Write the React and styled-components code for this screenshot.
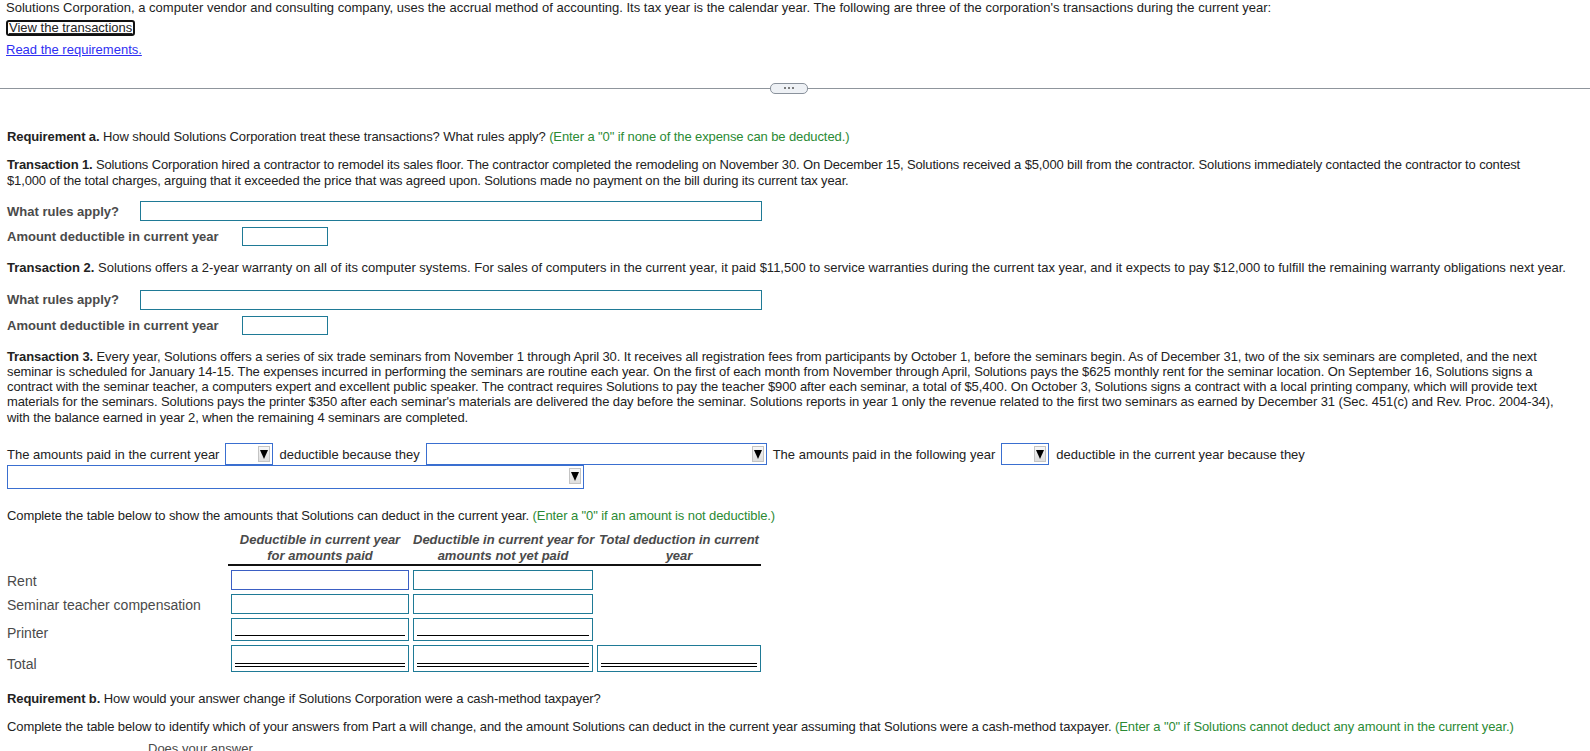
import React from 'react'
import styled, { createGlobalStyle } from 'styled-components'

const GlobalStyle = createGlobalStyle`
  body {
    margin: 0;
    background: #fff;
    font-family: "Liberation Sans", Arial, sans-serif;
    font-size: 13px;
    color: #222;
  }
`;

const narrow = `"Liberation Sans Narrow", "Arial Narrow", "Liberation Sans", sans-serif`;

const Page = styled.div`
  width: 1590px;
  height: 751px;
  overflow: hidden;
`;

const Top = styled.div`
  padding: 1px 6px 0;
`;

const Intro = styled.p`
  margin: 0;
  line-height: 14px;
  font-size: 13px;
`;

const FocusLink = styled.a`
  display: inline-block;
  margin-top: 5px;
  padding: 0 1px;
  color: #222;
  text-decoration: underline;
  border: 2px solid #111;
  border-radius: 3px;
  line-height: 12px;
`;

const BlueLink = styled.a`
  display: block;
  margin-top: 7px;
  color: #2f2ff2;
  text-decoration: underline;
  line-height: 14px;
`;

const Divider = styled.div`
  display: flex;
  align-items: center;
  margin-top: 25px;
  height: 12px;
`;

const Rule = styled.div`
  flex: ${p => p.$left ? '0 0 770px' : '1 1 auto'};
  height: 1px;
  background: #8f959c;
`;

const Pill = styled.div`
  flex: none;
  width: 36px;
  height: 9px;
  border: 1px solid #8a929c;
  border-radius: 5px;
  background: #eef1f5;
  display: flex;
  align-items: center;
  justify-content: center;
  gap: 2px;
  span {
    width: 2px;
    height: 2px;
    background: #555;
    border-radius: 1px;
  }
`;

const Body = styled.div`
  padding: 0 7px;
`;

const Cond = styled.p`
  margin: ${p => p.$mt || 0}px 0 0;
  font-family: ${narrow};
  font-size: 13px;
  letter-spacing: ${p => p.$ls ?? -0.1}px;
  white-space: nowrap;
  line-height: ${p => p.$lh || 15.3}px;
  color: #222;
  b { font-weight: bold; }
`;

const Hint = styled.span`
  color: #2b8a34;
`;

const FieldRow = styled.div`
  display: flex;
  align-items: center;
  margin-top: ${p => p.$mt || 0}px;
  height: ${p => p.$h || 20}px;
`;

const FieldLabel = styled.span`
  font-weight: bold;
  color: #4a4a4a;
  font-size: 13px;
  width: ${p => p.$w}px;
  flex: none;
`;

const TextBox = styled.div`
  width: ${p => p.$w}px;
  height: ${p => p.$h || 20}px;
  box-sizing: border-box;
  border: 1px solid #1f7a96;
  background: #fff;
`;

const InlineRow = styled.div`
  display: flex;
  align-items: center;
  margin-top: ${p => p.$mt || 0}px;
  font-size: 13px;
  color: #222;
`;

const Gap = styled.span`
  margin: 0 ${p => p.$r ?? 6}px 0 ${p => p.$l ?? 6}px;
`;

const SelectBox = styled.div`
  width: ${p => p.$w}px;
  height: ${p => p.$h || 22}px;
  box-sizing: border-box;
  border: 1px solid #3a6fd0;
  background: #fff;
  display: flex;
  justify-content: flex-end;
  align-items: flex-start;
  padding: 2px 2px 0 0;
`;

const Arrow = styled.div`
  width: 12px;
  height: 16px;
  box-sizing: border-box;
  background: linear-gradient(#f7f7f7, #dedede);
  border: 1px solid #c4c4c4;
  display: flex;
  align-items: center;
  justify-content: center;
  &::after {
    content: '';
    border-left: 4px solid transparent;
    border-right: 4px solid transparent;
    border-top: 9px solid #000;
  }
`;

const Select = ({ w, h }) => (
  <SelectBox $w={w} $h={h}>
    <Arrow />
  </SelectBox>
);

const Table = styled.div`
  display: grid;
  grid-template-columns: 220px 178px 180px 164px;
  column-gap: 4px;
  margin-top: ${p => p.$mt || 0}px;
`;

const Head = styled.div`
  font-family: ${narrow};
  font-size: 13px;
  font-weight: bold;
  font-style: italic;
  color: #4a4a4a;
  text-align: center;
  white-space: nowrap;
  line-height: 16px;
`;

const HeadRule = styled.div`
  grid-column: 2 / 5;
  height: 2px;
  background: #111;
  margin: 0 0 0 -3px;
`;

const RowLabel = styled.div`
  font-family: ${narrow};
  font-size: 14px;
  color: #4a4a4a;
  display: flex;
  align-items: flex-end;
  padding-bottom: ${p => p.$pb ?? 1}px;
  height: ${p => p.$h}px;
  margin-top: ${p => p.$mt || 0}px;
  box-sizing: border-box;
`;

const Cell = styled.div`
  height: ${p => p.$h}px;
  margin-top: ${p => p.$mt || 0}px;
  box-sizing: border-box;
  border: 1px solid ${p => p.$blue ? '#3b5fc4' : '#1f7a96'};
  padding: 0 3px 4px;
  display: flex;
  flex-direction: column;
  justify-content: flex-end;
  &::before {
    content: '';
    display: ${p => p.$lines ? 'block' : 'none'};
    height: ${p => p.$lines === 2 ? 2 : 0}px;
    border-top: 1.5px solid #000;
    border-bottom: ${p => p.$lines === 2 ? '1.5px solid #000' : 'none'};
  }
`;

const Empty = styled.div``;

const CutHead = styled(Head)`
  grid-column: 1 / 3;
  text-align: left;
  padding-left: 141px;
  font-style: normal;
  font-weight: normal;
`;

export default function App() {
  return (
    <Page>
      <GlobalStyle />
      <Top>
        <Intro>
          Solutions Corporation, a computer vendor and consulting company, uses the accrual method of accounting. Its tax year is the calendar year. The following are three of the corporation's transactions during the current year:
        </Intro>
        <FocusLink href="#">View the transactions</FocusLink>
        <BlueLink href="#">Read the requirements.</BlueLink>
      </Top>
      <Divider>
        <Rule $left />
        <Pill><span /><span /><span /></Pill>
        <Rule />
      </Divider>
      <Body>
        <Cond $mt={35}>
          <b>Requirement a.</b> How should Solutions Corporation treat these transactions? What rules apply? <Hint>(Enter a "0" if none of the expense can be deducted.)</Hint>
        </Cond>
        <Cond $mt={13} $lh={16} $ls={-0.14}>
          <b>Transaction 1.</b> Solutions Corporation hired a contractor to remodel its sales floor. The contractor completed the remodeling on November 30. On December 15, Solutions received a $5,000 bill from the contractor. Solutions immediately contacted the contractor to contest<br />
          $1,000 of the total charges, arguing that it exceeded the price that was agreed upon. Solutions made no payment on the bill during its current tax year.
        </Cond>
        <FieldRow $mt={12}>
          <FieldLabel $w={133}>What rules apply?</FieldLabel>
          <TextBox $w={622} />
        </FieldRow>
        <FieldRow $mt={6} $h={18}>
          <FieldLabel $w={235}>Amount deductible in current year</FieldLabel>
          <TextBox $w={86} $h={19} />
        </FieldRow>
        <Cond $mt={15} $ls={0}>
          <b>Transaction 2.</b> Solutions offers a 2-year warranty on all of its computer systems. For sales of computers in the current year, it paid $11,500 to service warranties during the current tax year, and it expects to pay $12,000 to fulfill the remaining warranty obligations next year.
        </Cond>
        <FieldRow $mt={14}>
          <FieldLabel $w={133}>What rules apply?</FieldLabel>
          <TextBox $w={622} />
        </FieldRow>
        <FieldRow $mt={7} $h={18}>
          <FieldLabel $w={235}>Amount deductible in current year</FieldLabel>
          <TextBox $w={86} $h={19} />
        </FieldRow>
        <Cond $mt={14} $lh={15.3}>
          <b>Transaction 3.</b> Every year, Solutions offers a series of six trade seminars from November 1 through April 30. It receives all registration fees from participants by October 1, before the seminars begin. As of December 31, two of the six seminars are completed, and the next<br />
          seminar is scheduled for January 14-15. The expenses incurred in performing the seminars are routine each year. On the first of each month from November through April, Solutions pays the $625 monthly rent for the seminar location. On September 16, Solutions signs a<br />
          contract with the seminar teacher, a computers expert and excellent public speaker. The contract requires Solutions to pay the teacher $900 after each seminar, a total of $5,400. On October 3, Solutions signs a contract with a local printing company, which will provide text<br />
          materials for the seminars. Solutions pays the printer $350 after each seminar's materials are delivered the day before the seminar. Solutions reports in year 1 only the revenue related to the first two seminars as earned by December 31 (Sec. 451(c) and Rev. Proc. 2004-34),<br />
          with the balance earned in year 2, when the remaining 4 seminars are completed.
        </Cond>
        <InlineRow $mt={18}>
          <span>The amounts paid in the current year</span>
          <Gap $l={6} $r={0} />
          <Select w={48} />
          <Gap $l={6} $r={6}>deductible because they</Gap>
          <Select w={341} />
          <Gap $l={6} $r={6}>The amounts paid in the following year</Gap>
          <Select w={48} />
          <Gap $l={7} $r={0}>deductible in the current year because they</Gap>
        </InlineRow>
        <InlineRow>
          <Select w={577} h={24} />
        </InlineRow>
        <Cond $mt={19}>
          Complete the table below to show the amounts that Solutions can deduct in the current year. <Hint>(Enter a "0" if an amount is not deductible.)</Hint>
        </Cond>
        <Table $mt={9}>
          <Empty />
          <Head>Deductible in current year<br />for amounts paid</Head>
          <Head>Deductible in current year for<br />amounts not yet paid</Head>
          <Head>Total deduction in current<br />year</Head>
          <HeadRule />

          <RowLabel $h={20} $mt={4}>Rent</RowLabel>
          <Cell $h={20} $mt={4} $blue />
          <Cell $h={20} $mt={4} />
          <Empty />

          <RowLabel $h={20} $mt={4}>Seminar teacher compensation</RowLabel>
          <Cell $h={20} $mt={4} />
          <Cell $h={20} $mt={4} />
          <Empty />

          <RowLabel $h={23} $mt={4} $pb={0}>Printer</RowLabel>
          <Cell $h={23} $mt={4} $lines={1} />
          <Cell $h={23} $mt={4} $lines={1} />
          <Empty />

          <RowLabel $h={27} $mt={4} $pb={0}>Total</RowLabel>
          <Cell $h={27} $mt={4} $lines={2} />
          <Cell $h={27} $mt={4} $lines={2} />
          <Cell $h={27} $mt={4} $lines={2} />
        </Table>
        <Cond $mt={19}>
          <b>Requirement b.</b> How would your answer change if Solutions Corporation were a cash-method taxpayer?
        </Cond>
        <Cond $mt={12}>
          Complete the table below to identify which of your answers from Part a will change, and the amount Solutions can deduct in the current year assuming that Solutions were a cash-method taxpayer. <Hint>(Enter a "0" if Solutions cannot deduct any amount in the current year.)</Hint>
        </Cond>
        <Table $mt={7}>
          <CutHead>Does your answer</CutHead>
        </Table>
      </Body>
    </Page>
  );
}
